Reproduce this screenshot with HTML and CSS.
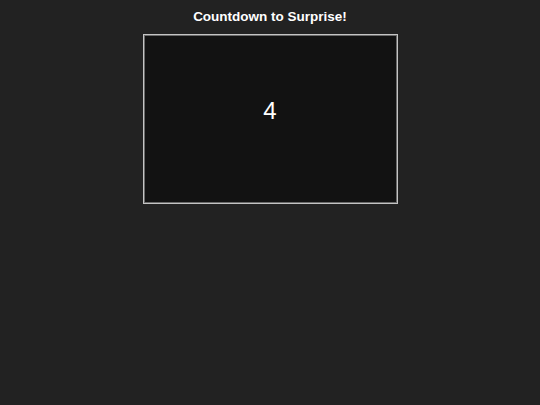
FILE: index.html
```html
<!DOCTYPE html>
<html>
<head>
<meta charset="utf-8">
<link rel="stylesheet" href="styles.css">
</head>
<body>
<main class="page">
  <h1 class="title">Countdown to Surprise!</h1>
  <div class="stage">
    <span class="count">4</span>
  </div>
</main>
</body>
</html>
```

FILE: styles.css
```css
html, body {
  margin: 0;
  padding: 0;
  background: #222222;
  height: 100%;
}
.page {
  display: flex;
  flex-direction: column;
  align-items: center;
  padding-top: 8px;
  font-family: "Liberation Sans", Arial, sans-serif;
  color: #ffffff;
}
.title {
  margin: 0 0 9px 0;
  font-size: 13.5px;
  line-height: 17px;
  font-weight: bold;
}
.stage {
  box-sizing: border-box;
  width: 255px;
  height: 170px;
  border: 1px solid #c4c4c4;
  box-shadow: inset 0 0 0 1px #6a6a6a;
  background: #121212;
  display: flex;
  justify-content: center;
  padding-top: 62px;
}
.count {
  font-size: 24px;
  line-height: 28px;
}
```
